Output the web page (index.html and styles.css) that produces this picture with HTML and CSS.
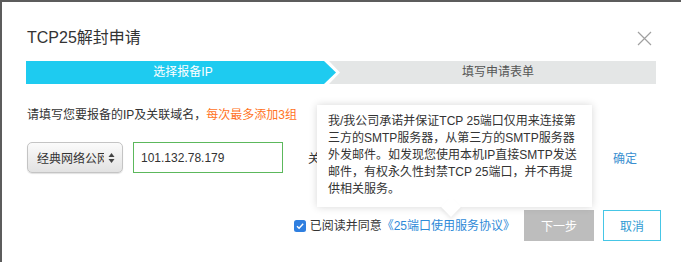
FILE: index.html
```html
<!DOCTYPE html>
<html lang="zh-CN">
<head>
  <meta charset="UTF-8">
  <title>TCP25解封申请</title>
  <link rel="stylesheet" href="styles.css">
</head>
<body>
<div class="dialog">
  <div class="head">
    <h1 class="title">TCP25解封申请</h1>
    <span class="close">
      <svg width="15" height="15" viewBox="0 0 15 15"><path d="M1 1L14 14M14 1L1 14" stroke="#a0a0a0" stroke-width="1.2" fill="none"/></svg>
    </span>
  </div>

  <div class="steps">
    <div class="step-cur"><div class="step-cur-fill">选择报备IP</div></div>
    <div class="step-next">填写申请表单</div>
  </div>

  <p class="hint">请填写您要报备的IP及关联域名，<span class="hint-em">每次最多添加3组</span></p>

  <div class="form-row">
    <div class="select">
      <span class="select-text">经典网络公网</span>
      <svg class="select-arrow" width="7" height="12" viewBox="0 0 7 12"><path d="M3.5 1L6.5 5H0.5Z M3.5 11L0.5 7H6.5Z" fill="#444"/></svg>
    </div>
    <input class="ip-input" type="text" value="101.132.78.179">
    <span class="domain-label">关联域名</span>
    <input class="domain-input" type="text">
    <a class="ok-link" href="#">确定</a>
  </div>

  <div class="foot">
    <label class="agree">
      <svg class="check" width="12" height="12" viewBox="0 0 12 12"><rect x="0" y="0" width="12" height="12" rx="2.5" fill="#2f7fe0"/><path d="M3 6.2L5.1 8.3L9.2 3.8" stroke="#fff" stroke-width="1.4" fill="none"/></svg>
      已阅读并同意<a class="agree-link" href="#">《25端口使用服务协议》</a>
    </label>
    <button class="btn btn-next" type="button">下一步</button>
    <button class="btn btn-cancel" type="button">取消</button>
  </div>

  <div class="tip">
    <span class="tip-line">我/我公司承诺并保证TCP 25端口仅用来连接第</span>
    <span class="tip-line">三方的SMTP服务器，从第三方的SMTP服务器</span>
    <span class="tip-line">外发邮件。如发现您使用本机IP直接SMTP发送</span>
    <span class="tip-line">邮件，有权永久性封禁TCP 25端口，并不再提</span>
    <span class="tip-line">供相关服务。</span>
    <div class="tip-arrow"></div>
  </div>
</div>
</body>
</html>
```

FILE: styles.css
```css
body {
  margin: 0;
  font-family: "Liberation Sans", "Noto Sans CJK SC", sans-serif;
  font-size: 12px;
  color: #333;
  background: #fff;
}
.dialog {
  position: relative;
  height: 262px;
  box-sizing: border-box;
  border-top: 2px solid #5c5c5c;
  border-left: 2px solid #5c5c5c;
  padding: 26px 25px 0 24px;
  overflow: hidden;
}
.head {
  display: flex;
  justify-content: space-between;
  align-items: center;
  padding-left: 1px;
}
.title {
  margin: 0;
  font-size: 16px;
  line-height: 20px;
  font-weight: normal;
  color: #333;
}
.close {
  display: flex;
  margin-right: 4px;
}
.steps {
  display: flex;
  margin-top: 13px;
  height: 23px;
  background: #e4e6e6;
  line-height: 23px;
}
.step-cur {
  width: 314px;
  background: #fff;
  clip-path: polygon(0 0, calc(100% - 11px) 0, 100% 50%, calc(100% - 11px) 100%, 0 100%);
}
.step-cur-fill {
  width: 310px;
  height: 100%;
  background: #1ecbf0;
  color: #fff;
  text-align: center;
  padding-left: 4px;
  box-sizing: border-box;
  clip-path: polygon(0 0, calc(100% - 12px) 0, 100% 50%, calc(100% - 12px) 100%, 0 100%);
}
.step-next {
  flex: 1;
  text-align: center;
  color: #555;
}
.hint {
  margin: 22px 0 0 1px;
  line-height: 18px;
}
.hint-em {
  color: #ff7324;
}
.form-row {
  display: flex;
  align-items: center;
  margin-top: 18px;
  height: 31px;
}
.select {
  display: flex;
  align-items: center;
  width: 96px;
  height: 31px;
  box-sizing: border-box;
  margin-left: 1px;
  padding: 0 7px 0 9px;
  border: 1px solid #c4c4c4;
  border-radius: 5px;
  background: linear-gradient(#fbfbfb, #e2e2e2);
  box-shadow: 0 1px 1px rgba(0, 0, 0, 0.12);
}
.select-text {
  width: 67px;
  overflow: hidden;
  white-space: nowrap;
}
.select-arrow {
  margin-left: auto;
}
.ip-input {
  width: 150px;
  height: 31px;
  box-sizing: border-box;
  margin: 0 0 0 10px;
  padding: 0 7px;
  border: 1px solid #5cb85c;
  font-family: inherit;
  font-size: 12px;
  color: #333;
  outline: none;
}
.domain-label {
  margin-left: 25px;
}
.domain-input {
  width: 216px;
  height: 31px;
  box-sizing: border-box;
  margin-left: 10px;
  border: 1px solid #ccc;
}
.ok-link {
  margin-left: 31px;
  color: #3a8fd0;
  text-decoration: none;
}
.foot {
  display: flex;
  justify-content: flex-end;
  align-items: center;
  margin: 37px -5px 0 0;
}
.agree {
  display: flex;
  align-items: center;
  line-height: 18px;
}
.check {
  margin-right: 4px;
}
.agree-link {
  color: #2e8ad8;
  text-decoration: none;
}
.btn {
  height: 31px;
  box-sizing: border-box;
  font-family: inherit;
  font-size: 12px;
  cursor: pointer;
}
.btn-next {
  width: 70px;
  margin-left: 9px;
  border: none;
  background: #bdbdbd;
  color: #fff;
}
.btn-cancel {
  width: 58px;
  margin-left: 9px;
  border: 1px solid #46c6e6;
  background: #fff;
  color: #2f9bd3;
}
.tip {
  position: absolute;
  left: 315px;
  top: 103px;
  width: 275px;
  box-sizing: border-box;
  padding: 8px 8px 9px 11px;
  background: #fff;
  box-shadow: 0 0 8px rgba(0, 0, 0, 0.16);
  line-height: 17px;
  color: #333;
}
.tip-line {
  display: block;
  white-space: nowrap;
  position: relative;
  z-index: 1;
}
.tip-arrow {
  position: absolute;
  left: 127px;
  bottom: -7px;
  width: 14px;
  height: 14px;
  background: #fff;
  transform: rotate(45deg);
  box-shadow: 2px 2px 4px rgba(0, 0, 0, 0.08);
}
```
